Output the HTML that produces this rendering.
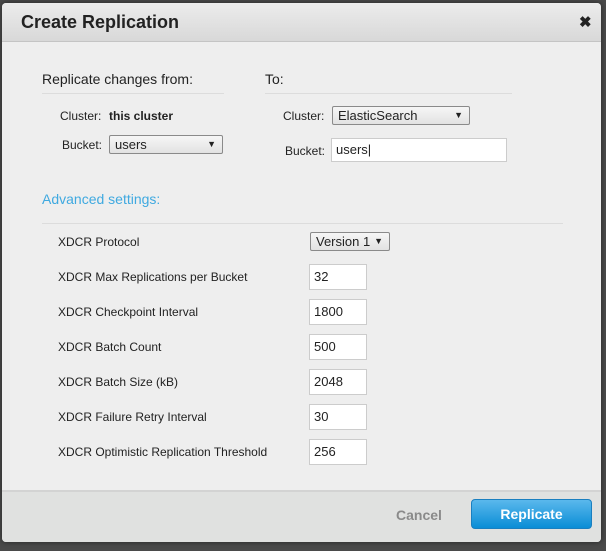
<!DOCTYPE html>
<html><head><style>
body{margin:0;width:606px;height:551px;background:#4a4a4a;position:relative;overflow:hidden;font-family:"Liberation Sans",sans-serif;color:#222}
.a{position:absolute}
.modal{left:2px;top:3px;width:599px;height:539px;background:#eeeeee;border-radius:4px;box-shadow:0 0 6px rgba(0,0,0,.5);overflow:hidden}
.hdr{left:0;top:0;width:599px;height:38px;background:linear-gradient(#ececec,#d8d8d8);border-bottom:1px solid #c4c4c4}
.ftr{left:0;top:487px;width:599px;height:52px;background:#e0e1e0;border-top:2px solid #d3d3d3}
.lbl{font-size:12px;color:#222}
.sel{background:linear-gradient(#f6f6f6,#e2e2e2);border:1px solid #8a8a8a;border-radius:2px;font-size:13px;box-sizing:border-box;padding-left:5px;line-height:17px}
.sel:after{content:"▼";position:absolute;right:6px;top:0;font-size:9px}
.inp{background:#fff;border:1px solid #ccc;box-sizing:border-box;font-size:13px;padding-left:4px;line-height:24px}
.line{height:1px;background:#dcdcdc}
</style></head><body>
<div class="a modal">
 <div class="a hdr"><div class="a" style="left:19px;top:9px;font-size:18px;font-weight:bold;color:#222">Create Replication</div>
 <div class="a" style="left:577px;top:10px;font-size:15px;font-weight:bold">✖</div></div>
</div>
<div class="a" style="left:42px;top:71px;font-size:14px">Replicate changes from:</div>
<div class="a line" style="left:42px;top:93px;width:182px"></div>
<div class="a" style="left:265px;top:71px;font-size:14px">To:</div>
<div class="a line" style="left:265px;top:93px;width:247px"></div>
<div class="a lbl" style="left:60px;top:109px">Cluster:</div>
<div class="a lbl" style="left:109px;top:109px;font-weight:bold">this cluster</div>
<div class="a lbl" style="left:62px;top:138px">Bucket:</div>
<div class="a sel" style="left:109px;top:135px;width:114px;height:19px">users</div>
<div class="a lbl" style="left:283px;top:109px">Cluster:</div>
<div class="a sel" style="left:332px;top:106px;width:138px;height:19px">ElasticSearch</div>
<div class="a lbl" style="left:285px;top:144px">Bucket:</div>
<div class="a inp" style="left:331px;top:138px;width:176px;height:24px;line-height:22px">users|</div>
<div class="a" style="left:42px;top:191px;font-size:14px;color:#3fa9e0">Advanced settings:</div>
<div class="a line" style="left:42px;top:223px;width:521px"></div>
<div class="a lbl" style="left:58px;top:235px">XDCR Protocol</div>
<div class="a sel" style="left:310px;top:232px;width:80px;height:19px">Version 1</div>
<div class="a lbl" style="left:58px;top:270px">XDCR Max Replications per Bucket</div>
<div class="a inp" style="left:309px;top:264px;width:58px;height:26px">32</div>
<div class="a lbl" style="left:58px;top:305px">XDCR Checkpoint Interval</div>
<div class="a inp" style="left:309px;top:299px;width:58px;height:26px">1800</div>
<div class="a lbl" style="left:58px;top:340px">XDCR Batch Count</div>
<div class="a inp" style="left:309px;top:334px;width:58px;height:26px">500</div>
<div class="a lbl" style="left:58px;top:375px">XDCR Batch Size (kB)</div>
<div class="a inp" style="left:309px;top:369px;width:58px;height:26px">2048</div>
<div class="a lbl" style="left:58px;top:410px">XDCR Failure Retry Interval</div>
<div class="a inp" style="left:309px;top:404px;width:58px;height:26px">30</div>
<div class="a lbl" style="left:58px;top:445px">XDCR Optimistic Replication Threshold</div>
<div class="a inp" style="left:309px;top:439px;width:58px;height:26px">256</div>
<div class="a" style="left:2px;top:490px;width:599px;height:52px;background:#e0e1e0;border-top:2px solid #d3d3d3;box-sizing:border-box;border-radius:0 0 4px 4px"></div>
<div class="a" style="left:396px;top:507px;font-size:14px;font-weight:bold;color:#8a8a8a">Cancel</div>
<div class="a" style="left:471px;top:499px;width:121px;height:30px;box-sizing:border-box;border:1px solid #1a7fc0;border-radius:4px;background:linear-gradient(#5ab8ec,#0a8dd6);color:#fff;font-size:14px;font-weight:bold;text-align:center;line-height:28px">Replicate</div>
</body></html>
